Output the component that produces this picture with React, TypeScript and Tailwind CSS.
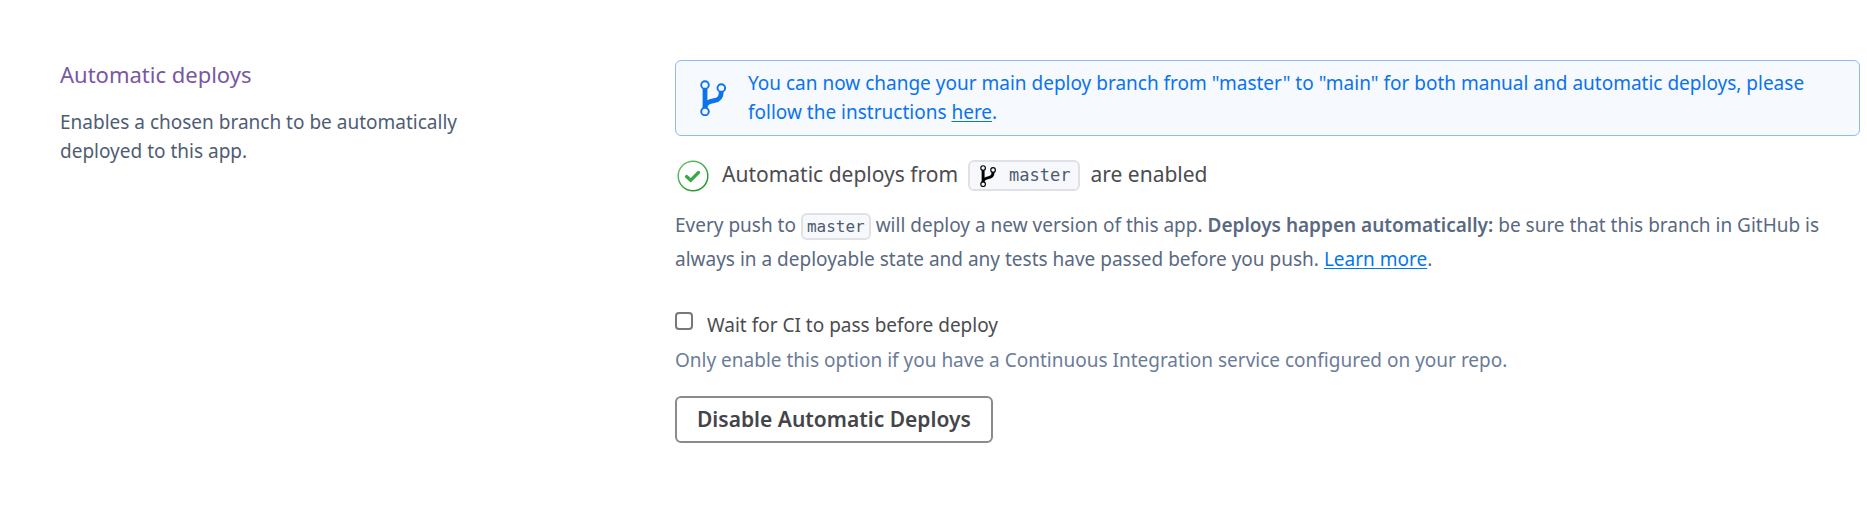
function BranchIcon({ className }: { className: string }) {
  return (
    <svg viewBox="0 0 26 36" className={className} fill="none" stroke="currentColor" aria-hidden="true">
      <path d="M5 8.500V28" strokeWidth="4.800" />
      <path d="M21.300 11.500C21.300 18 18.500 20 14 20.700C9 21.500 6 22.500 5 27" strokeWidth="4.800" />
      <circle cx="5" cy="5" r="3.800" strokeWidth="1.900" />
      <circle cx="21.300" cy="8" r="3.800" strokeWidth="1.900" />
      <circle cx="5" cy="31.500" r="3.800" strokeWidth="1.900" />
    </svg>
  );
}

function CheckIcon() {
  return (
    <svg viewBox="0 0 32 32" className="size-8 shrink-0" fill="none" aria-hidden="true">
      <defs>
        <linearGradient id="ring" x1="0" y1="0" x2="1" y2="1">
          <stop offset="0" stopColor="#6fc276" />
          <stop offset="1" stopColor="#12941c" />
        </linearGradient>
      </defs>
      <circle cx="16" cy="16" r="14.800" stroke="url(#ring)" strokeWidth="1.500" />
      <path d="M9.500 16.500L13.700 20.300L21.500 12.500" stroke="#39a845" strokeWidth="3.200" strokeLinecap="round" />
    </svg>
  );
}

export default function App() {
  return (
    <main className="flex bg-white pt-[60px] pr-[7px] pb-[72px] pl-[60px] font-['Noto_Sans',sans-serif] text-[19px] text-[#596981]">
      <section className="w-[615px] shrink-0 pr-36">
        <h2 className="text-[22px] leading-7 text-[#79589f]">Automatic deploys</h2>
        <p className="mt-5 leading-[29px] text-[#4f5d73]">
          Enables a chosen branch to be automatically deployed to this app.
        </p>
      </section>

      <section className="min-w-0 flex-1">
        <div className="flex items-center rounded-md border border-[#8dbdf7] bg-[#f6f9fe] py-2 pr-8 pl-6 text-[#0b73ec]">
          <BranchIcon className="mr-[22px] h-9 w-[26px] shrink-0" />
          <p className="leading-[29px]">
            You can now change your main deploy branch from "master" to "main" for both manual and automatic deploys,
            please follow the instructions <a href="#instructions" className="underline underline-offset-2">here</a>.
          </p>
        </div>

        <div className="mt-6 flex items-start pl-[2px] text-[21px] leading-7 text-[#4b4c50]">
          <CheckIcon />
          <span className="ml-[13px]">Automatic deploys from</span>
          <code className="mx-[10px] flex items-center rounded-md border-2 border-[#e0e1e6] bg-[#f7f8fc] px-2 font-['DejaVu_Sans_Mono',monospace] text-[17px] leading-[27px] text-[#4d5a70]">
            <BranchIcon className="mr-[13px] ml-[2px] h-[22px] w-4 text-black" />
            master
          </code>
          <span>are enabled</span>
        </div>

        <p className="mt-4 leading-[34px]">
          Every push to{" "}
          <code className="rounded-md border-2 border-[#e0e1e6] bg-[#f7f8fc] px-1 py-[2px] font-['DejaVu_Sans_Mono',monospace] text-[16px] leading-none text-[#4d5a70]">master</code>{" "}
          will deploy a new version of this app. <strong className="font-semibold">Deploys happen automatically:</strong> be
          sure that this branch in GitHub is always in a deployable state and any tests have passed before you push.{" "}
          <a href="#learn-more" className="text-[#0176f0] underline underline-offset-2">Learn more</a>.
        </p>

        <div className="mt-8">
          <label className="flex items-start leading-[34px] text-[#4b4c50]">
            <input type="checkbox" className="mt-1 mr-[14px] size-[18px] appearance-none rounded-[4px] border-2 border-[#77787b] bg-white" />
            Wait for CI to pass before deploy
          </label>
          <p className="leading-9 text-[#6b7c98]">
            Only enable this option if you have a Continuous Integration service configured on your repo.
          </p>
        </div>

        <button type="button" className="mt-[18px] h-[47px] rounded-md border-2 border-[#8a8b8e] bg-white px-5 text-[21px] font-semibold text-[#444549]">
          Disable Automatic Deploys
        </button>
      </section>
    </main>
  );
}
